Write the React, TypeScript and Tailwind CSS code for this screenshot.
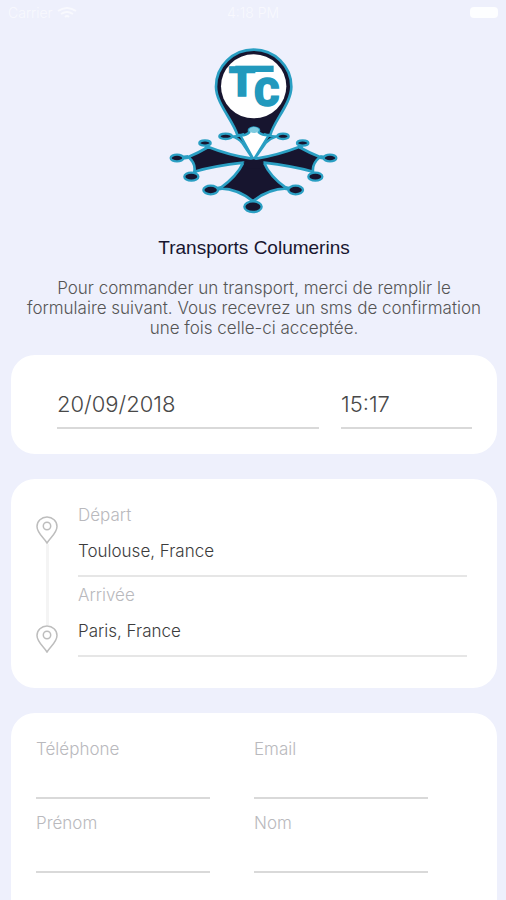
import React from "react";

function StatusBar() {
  return (
    <div className="grid h-[25px] grid-cols-3 items-center px-2 text-sm text-white/60">
      <div className="flex items-center gap-1">
        <span>Carrier</span>
        <svg className="h-3 w-5" viewBox="0 0 20 12" fill="none" stroke="currentColor" strokeWidth="2" aria-hidden="true">
          <path d="M1 4Q10-2 19 4M4 7Q10 3 16 7M8 10Q10 8 12 10" />
        </svg>
      </div>
      <span className="text-center">4:18 PM</span>
      <div className="flex justify-end">
        <span className="h-[11px] w-7 rounded bg-white/90" />
      </div>
    </div>
  );
}

const knobs = [
  [51, 354, 19, 10],
  [94, 410, 21, 12],
  [135, 309, 17, 8],
  [197, 289, 19, 8],
  [152, 450, 22, 13],
  [279, 500, 26, 16],
  [407, 450, 22, 13],
  [466, 410, 21, 12],
  [510, 354, 19, 10],
  [428, 309, 17, 8],
  [369, 289, 17, 8],
];

function Logo() {
  return (
    <svg className="h-[180px] w-[186px]" viewBox="3 0 558 540" role="img" aria-label="Transports Columerins">
      <g fill="#17152f" stroke="#2a9fc3" strokeWidth="8" strokeLinejoin="round">
        <path d="M232 285C222 245 168 190 168 140A113 111 0 0 1 394 140C394 190 340 245 331 285Z" />
        <path d="M275 356Q205 345 145 321Q116 338 85 351Q108 370 103 395Q162 378 250 368Q230 410 180 445Q236 447 279 484Q322 447 380 445Q330 410 312 368Q396 378 459 395Q456 370 480 351Q447 338 417 321Q355 345 289 356Z" />
      </g>
      <path d="M60 354L85 351M104 400L103 395M135 318L145 321M168 447L185 444M279 488V480M392 447L375 444M458 400L459 395M498 354L480 351M428 318L417 321" stroke="#2a9fc3" strokeWidth="12" />
      <g fill="#17152f" stroke="#2a9fc3" strokeWidth="7" strokeLinejoin="round">
        <path d="M215 289Q238 290 250 283L281 354L314 283Q326 290 350 289Q330 295 318 308L281 360L246 308Q236 295 215 289Z" />
        <path d="M241 286Q258 287 268 277Q262 264 281 262Q302 264 296 277Q308 287 326 286L281 359Z" fill="#fff" />
      </g>
      <ellipse cx="282" cy="270" rx="15" ry="9" fill="#7ecbe0" />
      <g fill="#17152f" stroke="#2a9fc3" strokeWidth="7">
        {knobs.map(([x, y, rx, ry]) => (
          <ellipse key={`${x}-${y}`} cx={x} cy={y} rx={rx} ry={ry} />
        ))}
      </g>
      <path d="M250 368Q265 360 281 358Q297 360 312 368L300 385H262Z" fill="#17152f" />
      <ellipse cx="281" cy="139" rx="98" ry="96" fill="#fff" />
      <rect x="226" y="77" width="115" height="19" fill="#2299bd" />
      <g fill="#2299bd" fontWeight="900" fontFamily="Roboto, sans-serif" stroke="#2299bd" strokeWidth="5">
        <text x="207" y="168" fontSize="124">T</text>
        <text x="283" y="198" fontSize="114">C</text>
      </g>
    </svg>
  );
}

function Pin() {
  return (
    <svg className="h-7 w-[22px]" viewBox="0 0 22 28" fill="none" stroke="#bdbdbd" strokeWidth="1.5" aria-hidden="true">
      <path d="M11 27C8 22 1 17 1 10.5A10 9.5 0 0 1 21 10.5C21 17 14 22 11 27Z" />
      <circle cx="11" cy="10" r="3.7" />
    </svg>
  );
}

function PlaceField({ id, label, value }: { id: string; label: string; value: string }) {
  return (
    <div className="flex flex-col">
      <label htmlFor={id} className="text-[17px] leading-5 text-[#b9b9bd]">{label}</label>
      <input id={id} defaultValue={value} className="h-[52px] w-full border-b-2 border-[#e6e6e6] bg-transparent pt-[2px] text-[17px] text-[#3c3c3c] outline-none" />
    </div>
  );
}

function ContactField({ id, label, type = "text" }: { id: string; label: string; type?: string }) {
  return (
    <div className="flex min-w-0 flex-col">
      <label htmlFor={id} className="text-[17px] leading-5 text-[#b9b9bd]">{label}</label>
      <input id={id} type={type} className="h-10 w-full border-b-2 border-[#d9d9d9] bg-transparent text-[17px] text-[#3c3c3c] outline-none" />
    </div>
  );
}

export default function App() {
  const dateInput = "h-12 w-full min-w-0 border-b-2 border-[#d9d9d9] bg-transparent text-[22px] text-[#484848] outline-none";
  return (
    <div className="min-h-screen bg-[#eef0fc] font-['Inter',sans-serif] font-light">
      <StatusBar />
      <main className="pr-[9px] pl-[11px]">
        <header className="flex flex-col items-center pt-[15px] text-center">
          <Logo />
          <h1 className="mt-4 font-['Liberation_Sans',sans-serif] text-[19px] leading-6 font-normal text-[#17152f]">Transports Columerins</h1>
          <p className="mt-[18px] max-w-[470px] text-[17px] leading-5 text-[#555]">
            Pour commander un transport, merci de remplir le formulaire suivant. Vous recevrez un sms de confirmation une fois celle-ci acceptée.
          </p>
        </header>
        <form className="mt-[17px] flex flex-col gap-[25px]">
          <section className="grid grid-cols-[2fr_1fr] gap-[22px] rounded-3xl bg-white pt-[26px] pr-[25px] pb-[25px] pl-[46px]">
            <input aria-label="Date" defaultValue="20/09/2018" className={dateInput} />
            <input aria-label="Heure" defaultValue="15:17" className={dateInput} />
          </section>
          <section className="flex gap-5 rounded-3xl bg-white pt-[26px] pr-[30px] pb-[31px] pl-[25px]">
            <div className="flex flex-col items-center pt-[11px] pb-1">
              <Pin />
              <span className="w-[3px] flex-1 bg-[#f4f4f4]" />
              <Pin />
            </div>
            <div className="flex flex-1 flex-col gap-2">
              <PlaceField id="depart" label="Départ" value="Toulouse, France" />
              <PlaceField id="arrivee" label="Arrivée" value="Paris, France" />
            </div>
          </section>
          <section className="grid grid-cols-2 gap-x-11 gap-y-[14px] rounded-t-3xl bg-white pt-[26px] pr-[69px] pb-8 pl-[25px]">
            <ContactField id="telephone" label="Téléphone" type="tel" />
            <ContactField id="email" label="Email" type="email" />
            <ContactField id="prenom" label="Prénom" />
            <ContactField id="nom" label="Nom" />
          </section>
        </form>
      </main>
    </div>
  );
}
